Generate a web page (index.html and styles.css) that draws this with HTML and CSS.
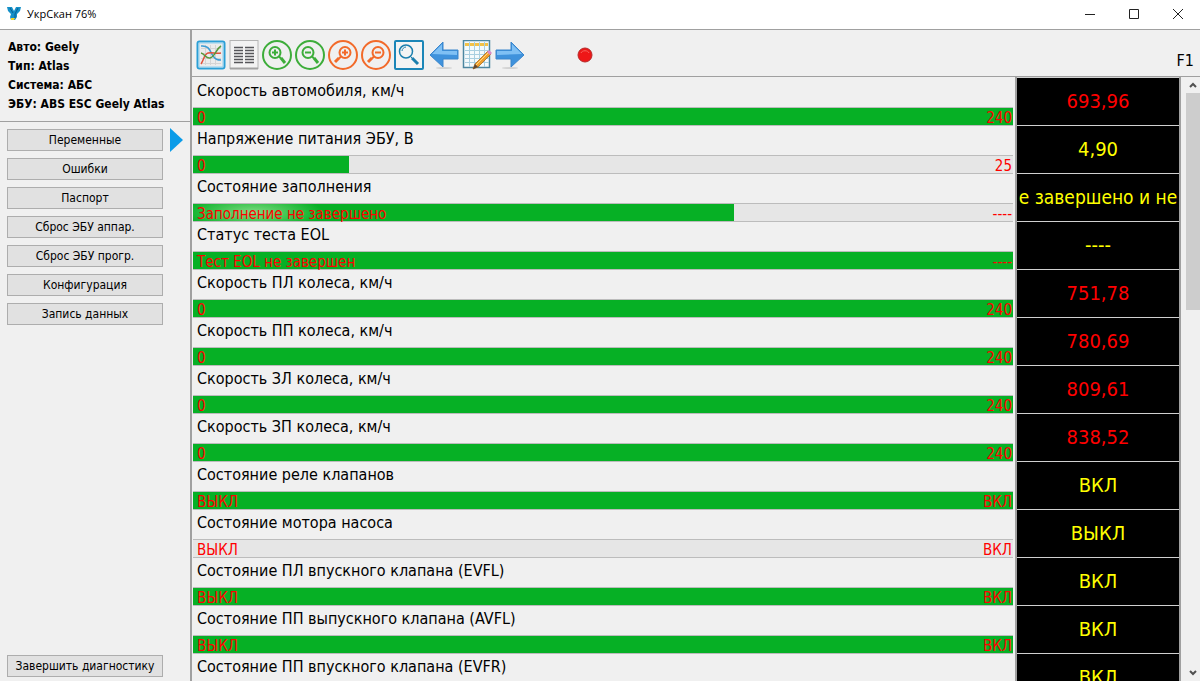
FILE: index.html
```html
<!doctype html>
<html lang="ru">
<head>
    <meta charset="UTF-8">
    <meta name="viewport" content="width=device-width, initial-scale=1.0">
    <title>УкрСкан</title>
    <link rel="stylesheet" href="styles.css">
</head>
<body>
    <header class="titlebar">
        <svg class="app-logo" width="14" height="14" viewBox="0 0 14 14" aria-hidden="true">
            <path d="M0 0h5l2 4 2-4h5l-1 4-3 3v3l-2 3H4l-1-3 1-3-3-3z" fill="#1490c8"/>
            <path d="M3 1l3 5M11 1L8 7v4" stroke="#0a5f94" fill="none"/>
            <path d="M4 11h4l-1 2H4z" fill="#f5d327"/>
        </svg>
        <span class="app-title">УкрСкан 76%</span>
        <div class="window-buttons">
            <button type="button" aria-label="Свернуть"><svg width="12" height="12" viewBox="0 0 12 12"><path d="M1 6.500h10"/></svg></button>
            <button type="button" aria-label="Развернуть"><svg width="12" height="12" viewBox="0 0 12 12"><path d="M1.500 1.500h9v9h-9z"/></svg></button>
            <button type="button" aria-label="Закрыть"><svg width="12" height="12" viewBox="0 0 12 12"><path d="M1 1l10 10M11 1L1 11"/></svg></button>
        </div>
    </header>

    <div class="window">
        <aside class="sidebar">
            <div class="car-info">
                <div>Авто: Geely</div>
                <div>Тип: Atlas</div>
                <div>Система: АБС</div>
                <div>ЭБУ: ABS ESC Geely Atlas</div>
            </div>
            <nav class="menu">
                <div class="menu-item">
                    <button type="button">Переменные</button>
                    <svg class="marker" width="13" height="24" viewBox="0 0 13 24" aria-hidden="true"><path d="M0 0l13 12L0 24z" fill="#0a9be8"/></svg>
                </div>
                <div class="menu-item"><button type="button">Ошибки</button></div>
                <div class="menu-item"><button type="button">Паспорт</button></div>
                <div class="menu-item"><button type="button">Сброс ЭБУ аппар.</button></div>
                <div class="menu-item"><button type="button">Сброс ЭБУ прогр.</button></div>
                <div class="menu-item"><button type="button">Конфигурация</button></div>
                <div class="menu-item"><button type="button">Запись данных</button></div>
                <div class="menu-item menu-finish"><button type="button">Завершить диагностику</button></div>
            </nav>
        </aside>

        <main class="content">
            <div class="toolbar">
                <div class="tools">
                    <button type="button" aria-label="График">
                        <svg width="30" height="30" viewBox="0 0 30 30">
                            <rect x="1.500" y="1.500" width="27" height="27" rx="2" fill="#ececec" stroke="#2b9fd6" stroke-width="2"/>
                            <rect x="3" y="3" width="24" height="24" fill="none" stroke="#8fd0f0"/>
                            <path d="M5 8.500h20M5 13.500h20M5 18.500h20M5 23.500h20M9.500 5v20M14.500 5v20M19.500 5v20" stroke="#d4d4d4" fill="none"/>
                            <path d="M5 6c8-1 9 5 12 10 3 4 5 4 8 4" stroke="#3b9cd4" stroke-width="1.500" fill="none"/>
                            <path d="M5 24c3-4 3-10 7-11 5-1 7 1 13 0" stroke="#e0513c" stroke-width="1.500" fill="none"/>
                            <path d="M5 13c4 1 5 6 9 5 5-1 6-9 11-12" stroke="#57983b" stroke-width="1.500" fill="none"/>
                        </svg>
                    </button>
                    <button type="button" aria-label="Таблица">
                        <svg width="30" height="30" viewBox="0 0 30 30">
                            <rect x="1" y="0.500" width="28" height="28" fill="#f3f3f3" stroke="#b4b4b4"/>
                            <path d="M1 28.500h28" stroke="#a2a2a2" stroke-width="2"/>
                            <path d="M5 7.500h9M5 10.500h9M5 13.500h9M5 16.500h9M5 19.500h9M5 22.500h9M16 7.500h9M16 10.500h9M16 13.500h9M16 16.500h9M16 19.500h9M16 22.500h9" stroke="#56565a" stroke-width="1.300"/>
                        </svg>
                    </button>
                    <button type="button" class="zoom-y" aria-label="Увеличить по Y">
                        <svg width="30" height="30" viewBox="0 0 30 30"><circle cx="15" cy="15" r="14"/><circle cx="13" cy="12.500" r="5.500"/><path d="M10 12.500h6M13 9.500v6M17 16.500l2 2"/><path class="handle" d="M19 18l4 5"/></svg>
                    </button>
                    <button type="button" class="zoom-y" aria-label="Уменьшить по Y">
                        <svg width="30" height="30" viewBox="0 0 30 30"><circle cx="15" cy="15" r="14"/><circle cx="13" cy="12.500" r="5.500"/><path d="M10 12.500h6M17 16.500l2 2"/><path class="handle" d="M19 18l4 5"/></svg>
                    </button>
                    <button type="button" class="zoom-x" aria-label="Увеличить по X">
                        <svg width="30" height="30" viewBox="0 0 30 30"><circle cx="15" cy="15" r="14"/><circle cx="17" cy="12.500" r="5.500"/><path d="M14 12.500h6M17 9.500v6M13 16.500l-2 2"/><path class="handle" d="M11 18l-4 4"/></svg>
                    </button>
                    <button type="button" class="zoom-x" aria-label="Уменьшить по X">
                        <svg width="30" height="30" viewBox="0 0 30 30"><circle cx="15" cy="15" r="14"/><circle cx="17" cy="12.500" r="5.500"/><path d="M14 12.500h6M13 16.500l-2 2"/><path class="handle" d="M11 18l-4 4"/></svg>
                    </button>
                    <button type="button" aria-label="Весь график">
                        <svg width="30" height="30" viewBox="0 0 30 30">
                            <rect x="1" y="1" width="28" height="28" rx="1" fill="#f4f4f4" stroke="#1b86b8" stroke-width="2"/>
                            <circle cx="12" cy="11.500" r="6.500" fill="none" stroke="#1b7fae" stroke-width="1.500"/>
                            <path d="M8 11c0-2 2-4 4-4M16.500 16.500l2 2" stroke="#1b7fae" fill="none"/>
                            <path d="M18 18l6 6" stroke="#1b7fae" stroke-width="3"/>
                        </svg>
                    </button>
                </div>
                <div class="tools tools-nav">
                    <button type="button" aria-label="Назад">
                        <svg width="30" height="30" viewBox="0 0 30 30">
                            <ellipse cx="15" cy="28" rx="8" ry="1" fill="#d2d2d2"/>
                            <path d="M1 15L14 2v8h15v9H14v8z" fill="#3f92dc" stroke="#3a86cc"/>
                            <path d="M3 14L13 4v7h15v4z" fill="#7fc0f4"/>
                        </svg>
                    </button>
                    <button type="button" aria-label="Редактировать таблицу">
                        <svg width="30" height="30" viewBox="0 0 30 30">
                            <rect x="1.500" y="0.500" width="26" height="27" fill="#f4fafc" stroke="#4c86a0" stroke-width="1.500"/>
                            <path d="M3 3h23v3H3z" fill="#f3c246"/>
                            <path d="M3 10.500h24M3 14.500h24M3 18.500h24M3 22.500h24M7.500 2v25M12.500 2v25M17.500 2v25M22.500 2v25" stroke="#a9cfe0"/>
                            <path d="M11 29l2-5L26 11l3 3-13 13z" fill="#f0a02c" stroke="#a96a1c" stroke-width="0.800"/>
                            <path d="M14 25L26 13" stroke="#ffd884"/>
                            <path d="M11 29l2-5 3 3z" fill="#5e4838"/>
                            <path d="M25 12l2-2 3 3-2 2z" fill="#d98ac8"/>
                        </svg>
                    </button>
                    <button type="button" aria-label="Вперёд">
                        <svg width="30" height="30" viewBox="0 0 30 30">
                            <ellipse cx="15" cy="28" rx="8" ry="1" fill="#d2d2d2"/>
                            <path d="M29 15L16 2v8H1v9h15v8z" fill="#3f92dc" stroke="#3a86cc"/>
                            <path d="M27 14L17 4v7H2v4z" fill="#7fc0f4"/>
                        </svg>
                    </button>
                </div>
                <button type="button" class="record" aria-label="Запись">
                    <svg width="16" height="16" viewBox="0 0 16 16">
                        <circle cx="8" cy="8" r="7" fill="#ee1717" stroke="#b52a2a"/>
                        <path d="M4 6c1-3 7-3 8 0" stroke="#f6645c" fill="none"/>
                    </svg>
                </button>
                <span class="help-key">F1</span>
            </div>

            <div class="list">
                <table class="params">
                    <tbody>
                        <tr>
                            <td class="param"><div class="name">Скорость автомобиля, км/ч</div><div class="bar"><div class="fill" style="width: 100%"></div><span>0</span><span>240</span></div></td>
                            <td class="value alarm">693,96</td>
                        </tr>
                        <tr>
                            <td class="param"><div class="name">Напряжение питания ЭБУ, В</div><div class="bar"><div class="fill" style="width: 19%"></div><span>0</span><span>25</span></div></td>
                            <td class="value">4,90</td>
                        </tr>
                        <tr>
                            <td class="param"><div class="name">Состояние заполнения</div><div class="bar"><div class="fill shine" style="width: 66%"></div><span>Заполнение не завершено</span><span>----</span></div></td>
                            <td class="value long"><div class="ticker">е завершено и не</div></td>
                        </tr>
                        <tr>
                            <td class="param"><div class="name">Статус теста EOL</div><div class="bar"><div class="fill" style="width: 100%"></div><span>Тест EOL не завершен</span><span>----</span></div></td>
                            <td class="value">----</td>
                        </tr>
                        <tr>
                            <td class="param"><div class="name">Скорость ПЛ колеса, км/ч</div><div class="bar"><div class="fill" style="width: 100%"></div><span>0</span><span>240</span></div></td>
                            <td class="value alarm">751,78</td>
                        </tr>
                        <tr>
                            <td class="param"><div class="name">Скорость ПП колеса, км/ч</div><div class="bar"><div class="fill" style="width: 100%"></div><span>0</span><span>240</span></div></td>
                            <td class="value alarm">780,69</td>
                        </tr>
                        <tr>
                            <td class="param"><div class="name">Скорость ЗЛ колеса, км/ч</div><div class="bar"><div class="fill" style="width: 100%"></div><span>0</span><span>240</span></div></td>
                            <td class="value alarm">809,61</td>
                        </tr>
                        <tr>
                            <td class="param"><div class="name">Скорость ЗП колеса, км/ч</div><div class="bar"><div class="fill" style="width: 100%"></div><span>0</span><span>240</span></div></td>
                            <td class="value alarm">838,52</td>
                        </tr>
                        <tr>
                            <td class="param"><div class="name">Состояние реле клапанов</div><div class="bar"><div class="fill" style="width: 100%"></div><span>ВЫКЛ</span><span>ВКЛ</span></div></td>
                            <td class="value">ВКЛ</td>
                        </tr>
                        <tr>
                            <td class="param"><div class="name">Состояние мотора насоса</div><div class="bar"><div class="fill" style="width: 0%"></div><span>ВЫКЛ</span><span>ВКЛ</span></div></td>
                            <td class="value">ВЫКЛ</td>
                        </tr>
                        <tr>
                            <td class="param"><div class="name">Состояние ПЛ впускного клапана (EVFL)</div><div class="bar"><div class="fill" style="width: 100%"></div><span>ВЫКЛ</span><span>ВКЛ</span></div></td>
                            <td class="value">ВКЛ</td>
                        </tr>
                        <tr>
                            <td class="param"><div class="name">Состояние ПП выпускного клапана (AVFL)</div><div class="bar"><div class="fill" style="width: 100%"></div><span>ВЫКЛ</span><span>ВКЛ</span></div></td>
                            <td class="value">ВКЛ</td>
                        </tr>
                        <tr>
                            <td class="param"><div class="name">Состояние ПП впускного клапана (EVFR)</div></td>
                            <td class="value">ВКЛ</td>
                        </tr>
                    </tbody>
                </table>
                <div class="scrollbar">
                    <button type="button" aria-label="Вверх"><svg width="8" height="6" viewBox="0 0 8 6"><path d="M1 5l3-3 3 3"/></svg></button>
                    <div class="track"><div class="thumb"></div></div>
                    <button type="button" aria-label="Вниз"><svg width="8" height="6" viewBox="0 0 8 6"><path d="M1 1l3 3 3-3"/></svg></button>
                </div>
            </div>
        </main>
    </div>
</body>
</html>
```
FILE: styles.css
```css
* {
    box-sizing: border-box;
}

body {
    margin: 0;
    height: 100vh;
    display: flex;
    flex-direction: column;
    overflow: hidden;
    background-color: #f0f0f0;
    color: black;
    font-family: "DejaVu Sans Condensed", "DejaVu Sans", sans-serif;
    font-size: 16px;
}

button {
    padding: 0;
    border: none;
    background: none;
    font-family: inherit;
    color: inherit;
}

svg {
    display: block;
}

/* title bar */
.titlebar {
    flex: none;
    display: flex;
    align-items: center;
    height: 29px;
    padding: 0 0 2px 7px;
    background-color: white;
}

.app-title {
    margin-left: 6px;
    font-family: "Open Sans", "Noto Sans", sans-serif;
    font-size: 11px;
}

.window-buttons {
    display: flex;
    margin-left: auto;
}

.window-buttons button {
    display: flex;
    justify-content: center;
    width: 44px;
}

.window-buttons path {
    fill: none;
    stroke: #222;
}

.window {
    flex: 1;
    display: flex;
    min-height: 0;
    border-top: 1px solid #a0a0a0;
}

/* left panel */
.sidebar {
    flex: none;
    display: flex;
    flex-direction: column;
    width: 190px;
}

.car-info {
    padding: 8px 8px 7px;
    border-bottom: 1px solid #a0a0a0;
    font-size: 12px;
    font-weight: bold;
    line-height: 19px;
}

.menu {
    flex: 1;
    display: flex;
    flex-direction: column;
    gap: 7px;
    padding: 7px 7px 4px;
}

.menu-item {
    display: flex;
    align-items: center;
    gap: 7px;
    height: 22px;
}

.menu-item button {
    width: 156px;
    height: 22px;
    border: 1px solid #adadad;
    background-color: #e1e1e1;
    font-size: 12px;
    line-height: 20px;
}

.menu-finish {
    margin-top: auto;
}

/* right part */
.content {
    flex: 1;
    display: flex;
    flex-direction: column;
    min-width: 0;
    border-left: 2px solid #a0a0a0;
}

.toolbar {
    flex: none;
    display: flex;
    align-items: center;
    height: 47px;
    padding: 3px 6px 0 4px;
    border-bottom: 1px solid #a0a0a0;
}

.tools {
    display: flex;
    gap: 3px;
}

.tools-nav {
    margin-left: 5px;
}

.zoom-y svg,
.zoom-x svg {
    fill: none;
    stroke: #3dad3a;
    stroke-width: 2;
}

.zoom-x svg {
    stroke: #f26a2a;
}

.zoom-y .handle,
.zoom-x .handle {
    stroke-width: 3;
}

.record {
    margin-left: 52px;
}

.help-key {
    align-self: flex-end;
    margin-left: auto;
    line-height: 30px;
}

.list {
    flex: 1;
    display: flex;
    min-height: 0;
    overflow: hidden;
}

.params {
    flex: 1;
    align-self: flex-start;
    table-layout: fixed;
    border-collapse: collapse;
}

.params td {
    height: 48px;
    padding: 0;
}

.param {
    vertical-align: top;
}

.name {
    height: 29px;
    padding-left: 5px;
    line-height: 25px;
}

.bar {
    position: relative;
    display: flex;
    justify-content: space-between;
    height: 19px;
    margin: 0 2px 0 1px;
    padding: 0 1px 0 4px;
    border: 1px solid #bcbcbc;
    border-width: 1px 0;
    background-color: #e6e6e6;
    color: #ff0000;
    font-size: 15px;
    line-height: 20px;
}

.fill {
    position: absolute;
    top: 0;
    bottom: 0;
    left: 0;
    background-color: #06b025;
}

.shine {
    background-image: radial-gradient(ellipse 70px 18px at 60px 50%, #7edb82, transparent);
}

.bar span {
    position: relative;
}

.params .value {
    width: 164px;
    padding: 0 1px 2px;
    border: 2px solid #a0a0a0;
    border-width: 1px 2px;
    border-top-color: #d0d0d0;
    border-bottom-color: #d0d0d0;
    background-color: black;
    color: #ffff00;
    font-size: 20px;
    text-align: center;
}

.params .alarm {
    color: #ff0000;
}

.params .long {
    font-size: 19px;
}

.ticker {
    overflow: hidden;
    white-space: nowrap;
}

.scrollbar {
    flex: none;
    display: flex;
    flex-direction: column;
    width: 14px;
    margin-left: 5px;
}

.scrollbar button {
    display: flex;
    align-items: center;
    justify-content: center;
    height: 16px;
}

.scrollbar path {
    fill: none;
    stroke: #505050;
    stroke-width: 2;
}

.track {
    flex: 1;
}

.thumb {
    height: 38%;
    background-color: #cdcdcd;
}
```
